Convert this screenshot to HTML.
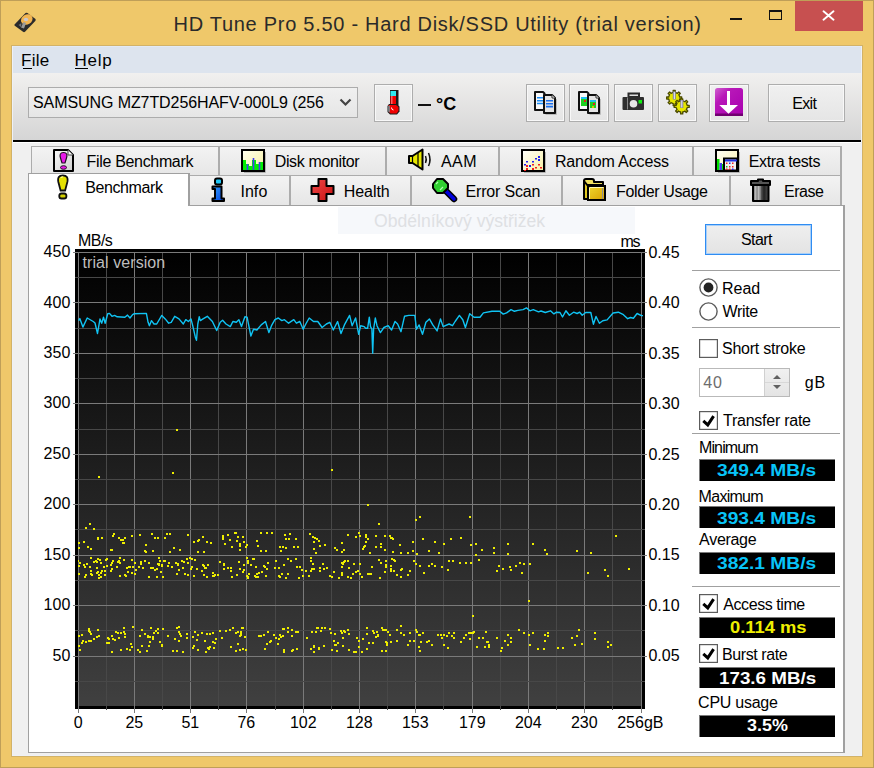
<!DOCTYPE html>
<html><head><meta charset="utf-8">
<style>
*{margin:0;padding:0;box-sizing:border-box}
html,body{width:874px;height:768px;overflow:hidden;background:#EFC86A;font-family:"Liberation Sans",sans-serif;color:#000}
.a{position:absolute}
.t{position:absolute;white-space:pre;line-height:1;font-size:15.2px}
#frame{left:0;top:0;width:874px;height:768px;border:1px solid #BF9F58}
#title{left:173.5px;top:13.5px;font-size:20px;letter-spacing:0.72px;color:#2A2A2A}
#close{left:795px;top:1px;width:68px;height:30px;background:#C75050}
#client{left:11px;top:45px;width:852px;height:712px;background:#F0F0F0;border:1px solid #D2B268}
#cedge{left:12px;top:46px;width:850px;height:710px;border:1px solid #EEF1F7;border-top:none}
#menubar{left:12px;top:46px;width:850px;height:27px;background:#DDE4EE;border-left:1px solid #E2EAF6;border-top:1px solid #E2EAF6}
#toolbar{left:12px;top:73px;width:850px;height:67px;background:linear-gradient(#F1F0EF,#D5D5D5)}
#tbline{left:12px;top:140px;width:850px;height:2px;background:#000;border-bottom:none}
#tbw{left:12px;top:142px;width:850px;height:1px;background:#FFF}
.btn{position:absolute;border:1px solid #ADADAD;box-shadow:inset 0 0 0 1px #F8F8F8;background:linear-gradient(#F0F0F0,#E5E5E5)}
.tab{position:absolute;border:1px solid #ACACAC;border-right-width:2px;border-bottom:none;background:linear-gradient(#F3F3F3,#E6E6E6)}
#panel{left:28px;top:205px;width:817px;height:548px;background:#fff;border:1px solid #A0A0A0;border-right:2px solid #A0A0A0}
.sep{position:absolute;left:692px;width:148px;height:1px;background:#A0A0A0}
.box{position:absolute;left:699px;width:136px;background:#000;border-top:1px solid #7A7A7A;border-left:1px solid #7A7A7A}
.val{position:absolute;left:699px;width:135px;text-align:center;font-weight:bold;font-size:16px;line-height:1;white-space:pre}
.cb{position:absolute;left:699px;width:19px;height:19px;border:1px solid #333;background:#fff}
.lab{position:absolute;white-space:pre;font-size:15.2px;line-height:1}
.ax{position:absolute;white-space:pre;font-size:15.2px;line-height:1}
</style></head><body>
<div id="frame" class="a"></div>
<!-- title bar -->
<svg class="a" style="left:0;top:0" width="40" height="40" viewBox="0 0 40 40">
 <path d="M14.5,24.5 L25.5,13 Q26.5,12.3 27.5,13 L35.5,19 Q36,20 35.3,21 L25,31.8 Q24,32.5 23,31.8 L14.8,25.8 Q14.2,25.2 14.5,24.5 Z" fill="#2B2B2B"/>
 <ellipse cx="26.8" cy="19.5" rx="6" ry="5" fill="#F2B450" transform="rotate(-30 26.8 19.5)"/>
 <ellipse cx="26" cy="19.5" rx="2.2" ry="1.8" fill="#C8C8D0"/>
 <path d="M21,27.5 L23.5,22 L26,23 L24,28.5 Z" fill="#9A9A9A"/>
 <path d="M18.5,25 L21.5,23 L21,27 Z" fill="#707070"/>
</svg>
<div id="title" class="t">HD Tune Pro 5.50 - Hard Disk/SSD Utility (trial version)</div>
<div class="a" style="left:730px;top:18px;width:12px;height:2px;background:#111"></div>
<div class="a" style="left:769px;top:10px;width:13px;height:10px;border:1px solid #111;border-top-width:2px"></div>
<div id="close" class="a"></div>
<svg class="a" style="left:822px;top:10px" width="13" height="11" viewBox="0 0 13 11"><path d="M1.5,1.3 L11.5,9.7 M11.5,1.3 L1.5,9.7" stroke="#fff" stroke-width="1.9" stroke-linecap="round"/></svg>

<div id="client" class="a"></div>
<div id="menubar" class="a"></div>
<div class="t" style="left:21.0px;top:52.0px;font-size:17px;letter-spacing:0.267px;color:#000">File</div>
<div class="a" style="left:23px;top:68px;width:9px;height:1px;background:#000"></div>
<div class="t" style="left:74.4px;top:52.0px;font-size:17px;letter-spacing:0.767px;color:#000">Help</div>
<div class="a" style="left:75px;top:68px;width:13px;height:1px;background:#000"></div>

<div id="toolbar" class="a"></div>
<div id="tbline" class="a"></div><div id="tbw" class="a"></div><div id="cedge" class="a"></div>
<!-- combo -->
<div class="a" style="left:28px;top:87px;width:330px;height:31px;border:1px solid #ACACAC;background:linear-gradient(#F0F0F0,#E6E6E6)"></div>
<div class="t" style="left:33.0px;top:95.2px;font-size:16px;letter-spacing:-0.083px;color:#000">SAMSUNG MZ7TD256HAFV-000L9 (256</div>
<svg class="a" style="left:339px;top:98px" width="13" height="9" viewBox="0 0 13 9"><path d="M1.5,1.5 L6.5,6.5 L11.5,1.5" stroke="#444" stroke-width="2.2" fill="none"/></svg>
<!-- thermometer button -->
<div class="btn" style="left:374px;top:84px;width:39px;height:38px"></div>
<svg class="a" style="left:376px;top:86px" width="36" height="34" viewBox="0 0 36 34">
 <rect x="14" y="4" width="8.5" height="20" fill="#1A1A1A"/>
 <rect x="14.5" y="5" width="5.5" height="5" fill="#30E8F0"/>
 <rect x="14.5" y="10" width="5.5" height="12" fill="#F00000"/>
 <rect x="15" y="10" width="1.5" height="8" fill="#FF6060"/>
 <path d="M13,18 H20 L23.5,20.5 V25.5 L21,28.5 H14 L11.5,26 V20 Z" fill="#1A1A1A"/>
 <path d="M12.5,19 H20 L22.5,21 V25 L20.5,27.5 H14.5 L12.5,25.5 Z" fill="#F00000"/>
 <path d="M12.5,20 V25.5 L13.5,26.5 V19.5 Z" fill="#40E0E8"/>
 <path d="M15.5,21.5 Q15.5,24 17.5,24" stroke="#fff" stroke-width="1" fill="none"/>
</svg>
<div class="a" style="left:418px;top:104px;width:13px;height:2px;background:#111"></div>
<div class="t" style="left:436px;top:95px;font-size:18px;font-weight:bold">°C</div>
<!-- toolbar buttons -->
<div class="btn" style="left:526px;top:84px;width:39px;height:38px"></div>
<div class="btn" style="left:569px;top:84px;width:40px;height:38px"></div>
<div class="btn" style="left:614px;top:84px;width:39px;height:38px"></div>
<div class="btn" style="left:658px;top:84px;width:39px;height:38px"></div>
<div class="btn" style="left:709px;top:84px;width:40px;height:38px"></div>
<div class="btn" style="left:768px;top:84px;width:77px;height:38px"></div>
<div class="t" style="left:792.2px;top:95.6px;font-size:16px;letter-spacing:-0.667px;color:#000">Exit</div>
<!-- icons in buttons -->
<svg class="a" style="left:526px;top:86px" width="40" height="34" viewBox="0 0 40 34">
 <path d="M9,6 H17 L18.5,7.5 V24 H9 Z" fill="#FAFAFA" stroke="#111" stroke-width="2" stroke-linejoin="round"/>
 <path d="M11,11.7 H17 M11,14.8 H17 M11,17.5 H17" stroke="#1A8CF8" stroke-width="1.6"/>
 <path d="M18,9 H26 L29,12 V27 H18 Z" fill="#E4E4E4" stroke="#111" stroke-width="2" stroke-linejoin="round"/>
 <path d="M26,9 V12 H29" fill="#fff" stroke="#333" stroke-width="1"/>
 <path d="M20,14.8 H27 M20,17.8 H27 M20,20.6 H27" stroke="#1A70F0" stroke-width="1.6"/>
 <path d="M30,13 V28 H19.5" stroke="#000" stroke-opacity="0.25" stroke-width="1.5" fill="none"/>
</svg>
<svg class="a" style="left:570px;top:86px" width="40" height="34" viewBox="0 0 40 34">
 <path d="M9,6 H17 L18.5,7.5 V24 H9 Z" fill="#FAFAFA" stroke="#111" stroke-width="2" stroke-linejoin="round"/>
 <rect x="11" y="11" width="6" height="9" fill="#20D020"/><rect x="11" y="11" width="6" height="2" fill="#20C0F0"/><rect x="14" y="14" width="2" height="2" fill="#E02020"/>
 <path d="M18,9 H26 L29,12 V27 H18 Z" fill="#E4E4E4" stroke="#111" stroke-width="2" stroke-linejoin="round"/>
 <path d="M26,9 V12 H29" fill="#fff" stroke="#333" stroke-width="1"/>
 <rect x="20" y="14" width="6" height="8" fill="#20D020"/><rect x="20" y="14" width="6" height="2" fill="#20C0F0"/><rect x="23" y="17" width="2" height="2" fill="#E02020"/><rect x="22" y="20" width="2" height="2" fill="#D0D000"/>
 <path d="M30,13 V28 H19.5" stroke="#000" stroke-opacity="0.25" stroke-width="1.5" fill="none"/>
</svg>
<svg class="a" style="left:614px;top:86px" width="40" height="34" viewBox="0 0 40 34">
 <path d="M14.5,7.5 H25 V11 H14.5 Z" fill="#E0E0E0" stroke="#2A2A2A" stroke-width="2"/>
 <rect x="8.5" y="11" width="21.5" height="13" rx="1" fill="#2E2E2E"/>
 <rect x="13" y="11.5" width="1" height="12" fill="#888"/>
 <circle cx="19.5" cy="17.8" r="3.8" fill="#E6E6E6"/>
 <rect x="24.5" y="14" width="3.5" height="3.5" fill="#10F010"/>
</svg>
<svg class="a" style="left:660px;top:86px" width="36" height="34" viewBox="0 0 36 34">
 <g fill="#E6E600" stroke="#4A4A00" stroke-width="1.3" stroke-linejoin="round">
  <path d="M19.59,10.48 L19.71,11.02 L21.72,10.93 L21.72,13.07 L19.71,12.98 L19.59,13.52 L19.09,14.74 L18.79,15.20 L20.28,16.56 L18.76,18.08 L17.40,16.59 L16.94,16.89 L15.72,17.39 L15.18,17.51 L15.27,19.52 L13.13,19.52 L13.22,17.51 L12.68,17.39 L11.46,16.89 L11.00,16.59 L9.64,18.08 L8.12,16.56 L9.61,15.20 L9.31,14.74 L8.81,13.52 L8.69,12.98 L6.68,13.07 L6.68,10.93 L8.69,11.02 L8.81,10.48 L9.31,9.26 L9.61,8.80 L8.12,7.44 L9.64,5.92 L11.00,7.41 L11.46,7.11 L12.68,6.61 L13.22,6.49 L13.13,4.48 L15.27,4.48 L15.18,6.49 L15.72,6.61 L16.94,7.11 L17.40,7.41 L18.76,5.92 L20.28,7.44 L18.79,8.80 L19.09,9.26Z"/>
  <path d="M27.09,18.88 L27.21,19.42 L29.22,19.33 L29.22,21.47 L27.21,21.38 L27.09,21.92 L26.59,23.14 L26.29,23.60 L27.78,24.96 L26.26,26.48 L24.90,24.99 L24.44,25.29 L23.22,25.79 L22.68,25.91 L22.77,27.92 L20.63,27.92 L20.72,25.91 L20.18,25.79 L18.96,25.29 L18.50,24.99 L17.14,26.48 L15.62,24.96 L17.11,23.60 L16.81,23.14 L16.31,21.92 L16.19,21.38 L14.18,21.47 L14.18,19.33 L16.19,19.42 L16.31,18.88 L16.81,17.66 L17.11,17.20 L15.62,15.84 L17.14,14.32 L18.50,15.81 L18.96,15.51 L20.18,15.01 L20.72,14.89 L20.63,12.88 L22.77,12.88 L22.68,14.89 L23.22,15.01 L24.44,15.51 L24.90,15.81 L26.26,14.32 L27.78,15.84 L26.29,17.20 L26.59,17.66Z"/>
 </g>
 <rect x="12.8" y="5.5" width="3" height="8" fill="#8080A0"/><rect x="13.8" y="6" width="1" height="7" fill="#F0F0FF"/>
 <rect x="20.3" y="14" width="3" height="8" fill="#8080A0"/><rect x="21.3" y="14.5" width="1" height="7" fill="#F0F0FF"/>
</svg>
<svg class="a" style="left:715px;top:88px" width="28" height="28" viewBox="0 0 28 28">
 <defs><linearGradient id="pg" x1="0" y1="0" x2="1" y2="1"><stop offset="0" stop-color="#D060D0"/><stop offset="0.3" stop-color="#B818B8"/><stop offset="1" stop-color="#A800B0"/></linearGradient></defs>
 <rect x="0" y="0" width="28" height="28" rx="2.5" fill="url(#pg)"/>
 <rect x="0" y="25.5" width="28" height="2.5" fill="#700070"/>
 <rect x="12" y="3" width="3" height="16" fill="#fff"/>
 <path d="M4.3,17 L23,17 L13.5,25.8 Z" fill="#fff"/>
</svg>

<!-- tabs row 1 -->
<div class="tab" style="left:31px;top:146px;width:189px;height:30px"></div>
<div class="tab" style="left:219px;top:146px;width:168px;height:30px"></div>
<div class="tab" style="left:386px;top:146px;width:114px;height:30px"></div>
<div class="tab" style="left:499px;top:146px;width:195px;height:30px"></div>
<div class="tab" style="left:693px;top:146px;width:149px;height:30px"></div>
<!-- tabs row 2 -->
<div class="tab" style="left:189px;top:175px;width:102px;height:30px"></div>
<div class="tab" style="left:290px;top:175px;width:122px;height:30px"></div>
<div class="tab" style="left:411px;top:175px;width:152px;height:30px"></div>
<div class="tab" style="left:562px;top:175px;width:169px;height:30px"></div>
<div class="tab" style="left:730px;top:175px;width:112px;height:30px"></div>

<div id="panel" class="a"></div>
<!-- selected tab -->
<div class="a" style="left:28px;top:173px;width:162px;height:33px;background:#fff;border:1px solid #A0A0A0;border-bottom:none;border-right:2px solid #A0A0A0"></div>

<!-- tab icons -->
<svg class="a" style="left:52px;top:148px" width="24" height="26" viewBox="0 0 24 26">
 <defs><linearGradient id="pgf" x1="0" y1="0" x2="1" y2="1"><stop offset="0" stop-color="#FAFAFA"/><stop offset="1" stop-color="#CFCFCF"/></linearGradient></defs>
 <path d="M2,2 H16 L21,7 V23 H2 Z" fill="url(#pgf)" stroke="#000" stroke-width="2" stroke-linejoin="round"/>
 <path d="M16,2 V7 H21" fill="#fff" stroke="#444" stroke-width="1"/>
 <path d="M11.5,4.5 C15,4.5 15.5,7 14.5,10 L13,15 H10 L8.5,10 C7.5,7 8,4.5 11.5,4.5 Z" fill="#E818E8" stroke="#201020" stroke-width="1.2"/>
 <ellipse cx="11.5" cy="19.5" rx="3" ry="1.8" fill="#E818E8" stroke="#201020" stroke-width="1"/>
</svg>
<svg class="a" style="left:56.5px;top:174px" width="12.6" height="27" viewBox="0 0 14 27" preserveAspectRatio="none">
 <path d="M6.5,1.5 C11,1.5 12.5,3.5 11.5,8 L9,16.5 H4 L1.5,8 C0.5,3.5 2,1.5 6.5,1.5 Z" fill="#E4E000" stroke="#111" stroke-width="2"/>
 <path d="M4.5,4 C4.5,3 6,2.8 7,3" stroke="#FFFF90" stroke-width="1.2" fill="none"/>
 <rect x="2.5" y="19.5" width="8" height="5" rx="2.5" fill="#D4D000" stroke="#111" stroke-width="2"/>
</svg>
<svg class="a" style="left:240px;top:148px" width="27" height="26" viewBox="0 0 27 26">
 <defs><linearGradient id="dmg" x1="0" y1="0" x2="1" y2="1"><stop offset="0" stop-color="#FFFFF0"/><stop offset="1" stop-color="#F8F0A0"/></linearGradient></defs>
 <rect x="2" y="2" width="22" height="21" fill="url(#dmg)" stroke="#000" stroke-width="2"/>
 <path d="M3,12 H6 V16 H9 V18 H12 V12 H16 V16 H19 V14 H23 V22 H3 Z" fill="#00F000"/>
 <path d="M7.5,16 V22 M13.5,10 V22 M19.5,14 V22" stroke="#4040F0" stroke-width="1.6"/>
 <path d="M25,4 V24 H4" stroke="#000" stroke-opacity="0.3" stroke-width="1.5" fill="none"/>
</svg>
<svg class="a" style="left:406px;top:147px" width="28" height="26" viewBox="0 0 28 26">
 <path d="M3,9 H6.5 L16.5,2.5 V22.5 L6.5,16 H3 Z" fill="#E8E800" stroke="#000" stroke-width="2" stroke-linejoin="round"/>
 <path d="M6.5,9 V16 M12,5.5 V19.5" stroke="#000" stroke-width="1.2"/>
 <path d="M19.5,9 Q21,12.5 19.5,16" stroke="#111" stroke-width="1.5" fill="none"/>
 <path d="M22.5,6 Q25.5,12.5 22.5,19" stroke="#111" stroke-width="1.5" fill="none"/>
</svg>
<svg class="a" style="left:520px;top:148px" width="27" height="26" viewBox="0 0 27 26">
 <defs><linearGradient id="rag" x1="0" y1="0" x2="1" y2="1"><stop offset="0" stop-color="#FFFFFF"/><stop offset="1" stop-color="#F8F0A0"/></linearGradient></defs>
 <rect x="2" y="2" width="22" height="21" fill="url(#rag)" stroke="#000" stroke-width="2"/>
 <path d="M25,4 V24 H4" stroke="#000" stroke-opacity="0.3" stroke-width="1.5" fill="none"/>
 <g fill="#2020F0"><rect x="6" y="13" width="2" height="1.5"/><rect x="12" y="13" width="2" height="1.5"/><rect x="15" y="10" width="2" height="1.5"/><rect x="18" y="8" width="2" height="2"/><rect x="18" y="11" width="2" height="2"/><rect x="4" y="16" width="2" height="1.5"/><rect x="9" y="17" width="2" height="2"/></g>
 <g fill="#F02020"><rect x="6" y="17" width="2" height="2"/><rect x="6" y="20" width="2" height="2"/><rect x="12" y="16" width="2" height="1.5"/><rect x="12" y="20" width="2" height="2"/><rect x="15" y="19" width="2" height="1.5"/><rect x="18" y="16" width="2" height="1.5"/><rect x="20" y="19" width="2" height="1.5"/><rect x="4" y="22" width="2" height="1"/></g>
</svg>
<svg class="a" style="left:714px;top:148px" width="27" height="26" viewBox="0 0 27 26">
 <defs><linearGradient id="etg" x1="0" y1="0" x2="1" y2="1"><stop offset="0" stop-color="#FFFFF8"/><stop offset="1" stop-color="#F8F0A8"/></linearGradient></defs>
 <rect x="2" y="2" width="22" height="21" fill="url(#etg)" stroke="#000" stroke-width="2"/>
 <path d="M25,4 V24 H4" stroke="#000" stroke-opacity="0.3" stroke-width="1.5" fill="none"/>
 <rect x="3" y="11" width="2.5" height="11" fill="#00E000"/><rect x="5.5" y="15" width="2.5" height="7" fill="#4040F0"/><rect x="8" y="16" width="1.5" height="6" fill="#00E000"/>
 <rect x="10" y="10.5" width="13" height="12" fill="#F0F0F0" stroke="#000" stroke-width="2"/>
 <rect x="11" y="11.5" width="12" height="2" fill="#2030E0"/>
 <g fill="#F02020"><rect x="12" y="14.5" width="1.5" height="1.5"/><rect x="18" y="14.5" width="1.5" height="1.5"/><rect x="15" y="18" width="1.5" height="1.5"/><rect x="18" y="18" width="1.5" height="1.5"/><rect x="12" y="20.5" width="1.5" height="1.5"/><rect x="15" y="20.5" width="1.5" height="1.5"/></g>
 <g fill="#2020F0"><rect x="15" y="14.5" width="1.5" height="1.5"/><rect x="18" y="20.5" width="1.5" height="1.5"/></g>
 <rect x="12" y="18" width="1.5" height="1.5" fill="#20B020"/>
</svg>
<svg class="a" style="left:211px;top:177px" width="16" height="26" viewBox="0 0 16 26">
 <defs><linearGradient id="ig" x1="0" y1="0" x2="1" y2="1"><stop offset="0" stop-color="#30A0FF"/><stop offset="1" stop-color="#0040E0"/></linearGradient></defs>
 <rect x="4" y="1.5" width="7" height="6" rx="2" fill="#20C8F8" stroke="#000" stroke-width="2"/>
 <path d="M1.5,9.5 H10.5 V21.5 H13 V24 H1.5 V21.5 H4 V12 H1.5 Z" fill="url(#ig)" stroke="#000" stroke-width="2" stroke-linejoin="round"/>
</svg>
<svg class="a" style="left:309px;top:177px" width="28" height="27" viewBox="0 0 28 27">
 <defs><linearGradient id="hg" x1="0" y1="0" x2="1" y2="1"><stop offset="0" stop-color="#F04848"/><stop offset="1" stop-color="#C81010"/></linearGradient></defs>
 <path d="M9.5,2 H17.5 V9 H24.5 V17 H17.5 V24 H9.5 V17 H2.5 V9 H9.5 Z" fill="url(#hg)" stroke="#000" stroke-width="2" stroke-linejoin="round"/>
</svg>
<svg class="a" style="left:431px;top:177px" width="27" height="27" viewBox="0 0 27 27">
 <path d="M15,14 L23,22" stroke="#000" stroke-width="6.5" stroke-linecap="round"/>
 <path d="M15,14 L23,22" stroke="#0000E0" stroke-width="3.5" stroke-linecap="round"/>
 <path d="M6,2 H12 L17,7 V11 L12,16 H6 L2,11 V7 Z" fill="#30D030" stroke="#000" stroke-width="2" stroke-linejoin="round"/>
 <path d="M5,7 L7,5 M9,13 L12,10" stroke="#B0FFB0" stroke-width="1.2"/>
</svg>
<svg class="a" style="left:582px;top:177px" width="26" height="27" viewBox="0 0 26 27">
 <defs><linearGradient id="fg" x1="0" y1="0" x2="1" y2="1"><stop offset="0" stop-color="#F0D830"/><stop offset="1" stop-color="#D8A000"/></linearGradient></defs>
 <path d="M2,4 Q2,2 4,2 H10 Q12,2 12,4 V5 H21 V8 H2 Z" fill="#F0E060" stroke="#000" stroke-width="2" stroke-linejoin="round"/>
 <path d="M2,4 V22 H6 V9 Z" fill="#E0C820" stroke="#000" stroke-width="2" stroke-linejoin="round"/>
 <rect x="6" y="9" width="17" height="14" fill="url(#fg)" stroke="#000" stroke-width="2"/>
 <path d="M8,10.5 H21.5 M7.5,11 V22" stroke="#FFF8B0" stroke-width="1"/>
 <path d="M20.5,11 V22" stroke="#909090" stroke-width="1"/>
</svg>
<svg class="a" style="left:749px;top:177px" width="26" height="27" viewBox="0 0 26 27">
 <defs><linearGradient id="tg" x1="0" y1="0" x2="1" y2="0"><stop offset="0" stop-color="#606060"/><stop offset="0.25" stop-color="#E8E8E8"/><stop offset="0.45" stop-color="#909090"/><stop offset="0.7" stop-color="#202020"/><stop offset="1" stop-color="#505050"/></linearGradient></defs>
 <path d="M9,2.5 H14 V4 H21 V8 H2 V4 H9 Z" fill="#555" stroke="#000" stroke-width="2" stroke-linejoin="round"/>
 <path d="M4,8 H19.5 V24 H4 Z" fill="url(#tg)" stroke="#000" stroke-width="2" stroke-linejoin="round"/>
 <path d="M8,9 V23 M13,9 V23" stroke="#303030" stroke-width="0.8"/>
</svg>

<!-- tab labels -->
<div class="t" style="left:86.6px;top:154.0px;font-size:16px;letter-spacing:-0.331px;color:#000">File Benchmark</div>
<div class="t" style="left:274.7px;top:154.1px;font-size:16px;letter-spacing:-0.355px;color:#000">Disk monitor</div>
<div class="t" style="left:441.0px;top:154.0px;font-size:16px;letter-spacing:0.4px;color:#000">AAM</div>
<div class="t" style="left:554.9px;top:154.0px;font-size:16px;letter-spacing:-0.117px;color:#000">Random Access</div>
<div class="t" style="left:748.8px;top:154.0px;font-size:16px;letter-spacing:-0.4px;color:#000">Extra tests</div>
<div class="t" style="left:85.2px;top:180.3px;font-size:16px;letter-spacing:-0.4px;color:#000">Benchmark</div>
<div class="t" style="left:240.4px;top:183.7px;font-size:16px;letter-spacing:0.067px;color:#000">Info</div>
<div class="t" style="left:343.7px;top:183.6px;font-size:16px;letter-spacing:-0.04px;color:#000">Health</div>
<div class="t" style="left:465.5px;top:183.6px;font-size:16px;letter-spacing:-0.178px;color:#000">Error Scan</div>
<div class="t" style="left:616.1px;top:183.6px;font-size:16px;letter-spacing:-0.382px;color:#000">Folder Usage</div>
<div class="t" style="left:784.0px;top:183.5px;font-size:16px;letter-spacing:-0.5px;color:#000">Erase</div>

<!-- watermark -->
<div class="a" style="left:338px;top:207px;width:297px;height:27px;background:#F6F8FB"></div>
<div class="t" style="left:374px;top:213px;font-size:17.6px;color:#DEE0E3">Obdélníkový výstřižek</div>

<!-- chart -->
<svg class="a" style="left:0;top:0" width="874" height="768" viewBox="0 0 874 768">
 <defs><linearGradient id="cg" x1="0" y1="0" x2="0" y2="1"><stop offset="0" stop-color="#000"/><stop offset="1" stop-color="#404040"/></linearGradient>
 <clipPath id="cc"><rect x="78" y="252" width="565" height="454"/></clipPath></defs>
 <rect x="75" y="249" width="570" height="460" fill="#000"/>
 <rect x="78" y="252" width="564" height="454" fill="url(#cg)"/><rect x="642" y="252" width="1" height="454" fill="#000"/>
 <rect x="106" y="252" width="1" height="458" fill="#484848"/><rect x="134" y="252" width="1" height="461" fill="#7A7A7A"/><rect x="162" y="252" width="1" height="458" fill="#484848"/><rect x="190" y="252" width="1" height="461" fill="#7A7A7A"/><rect x="218" y="252" width="1" height="458" fill="#484848"/><rect x="246" y="252" width="1" height="461" fill="#7A7A7A"/><rect x="275" y="252" width="1" height="458" fill="#484848"/><rect x="303" y="252" width="1" height="461" fill="#7A7A7A"/><rect x="331" y="252" width="1" height="458" fill="#484848"/><rect x="359" y="252" width="1" height="461" fill="#7A7A7A"/><rect x="387" y="252" width="1" height="458" fill="#484848"/><rect x="415" y="252" width="1" height="461" fill="#7A7A7A"/><rect x="443" y="252" width="1" height="458" fill="#484848"/><rect x="472" y="252" width="1" height="461" fill="#7A7A7A"/><rect x="500" y="252" width="1" height="458" fill="#484848"/><rect x="528" y="252" width="1" height="461" fill="#7A7A7A"/><rect x="556" y="252" width="1" height="458" fill="#484848"/><rect x="584" y="252" width="1" height="461" fill="#7A7A7A"/><rect x="612" y="252" width="1" height="458" fill="#484848"/><rect x="78" y="252" width="1" height="461" fill="#7A7A7A"/><rect x="641" y="252" width="1" height="461" fill="#7A7A7A"/><rect x="75" y="681" width="570" height="1" fill="#484848"/><rect x="73" y="656" width="574" height="1" fill="#7A7A7A"/><rect x="75" y="630" width="570" height="1" fill="#484848"/><rect x="73" y="605" width="574" height="1" fill="#7A7A7A"/><rect x="75" y="580" width="570" height="1" fill="#484848"/><rect x="73" y="555" width="574" height="1" fill="#7A7A7A"/><rect x="75" y="529" width="570" height="1" fill="#484848"/><rect x="73" y="504" width="574" height="1" fill="#7A7A7A"/><rect x="75" y="479" width="570" height="1" fill="#484848"/><rect x="73" y="454" width="574" height="1" fill="#7A7A7A"/><rect x="75" y="429" width="570" height="1" fill="#484848"/><rect x="73" y="403" width="574" height="1" fill="#7A7A7A"/><rect x="75" y="378" width="570" height="1" fill="#484848"/><rect x="73" y="353" width="574" height="1" fill="#7A7A7A"/><rect x="75" y="328" width="570" height="1" fill="#484848"/><rect x="73" y="302" width="574" height="1" fill="#7A7A7A"/><rect x="75" y="277" width="570" height="1" fill="#484848"/><rect x="73" y="252" width="574" height="1" fill="#7A7A7A"/>
 <g clip-path="url(#cc)">
 <path d="M181 560h2v2h-2zM287 558h2v2h-2zM250 564h2v2h-2zM96 567h2v2h-2zM89 566h2v2h-2zM99 559h2v2h-2zM214 574h2v2h-2zM117 561h2v2h-2zM279 576h2v2h-2zM263 565h2v2h-2zM391 558h2v2h-2zM353 563h2v2h-2zM123 559h2v2h-2zM176 573h2v2h-2zM135 569h2v2h-2zM283 564h2v2h-2zM253 558h2v2h-2zM96 561h2v2h-2zM296 566h2v2h-2zM178 569h2v2h-2zM223 563h2v2h-2zM333 571h2v2h-2zM156 568h2v2h-2zM246 575h2v2h-2zM312 563h2v2h-2zM393 559h2v2h-2zM212 572h2v2h-2zM126 567h2v2h-2zM90 570h2v2h-2zM323 568h2v2h-2zM359 563h2v2h-2zM301 569h2v2h-2zM264 566h2v2h-2zM347 576h2v2h-2zM230 570h2v2h-2zM97 571h2v2h-2zM285 577h2v2h-2zM342 563h2v2h-2zM201 570h2v2h-2zM84 566h2v2h-2zM131 559h2v2h-2zM96 572h2v2h-2zM119 562h2v2h-2zM203 574h2v2h-2zM103 566h2v2h-2zM254 575h2v2h-2zM341 574h2v2h-2zM167 565h2v2h-2zM193 575h2v2h-2zM385 560h2v2h-2zM134 562h2v2h-2zM152 567h2v2h-2zM267 562h2v2h-2zM78 565h2v2h-2zM196 568h2v2h-2zM384 571h2v2h-2zM243 569h2v2h-2zM295 558h2v2h-2zM367 573h2v2h-2zM359 573h2v2h-2zM203 565h2v2h-2zM110 570h2v2h-2zM97 558h2v2h-2zM144 560h2v2h-2zM186 558h2v2h-2zM77 560h2v2h-2zM110 564h2v2h-2zM85 574h2v2h-2zM275 560h2v2h-2zM158 564h2v2h-2zM194 559h2v2h-2zM350 577h2v2h-2zM227 567h2v2h-2zM105 559h2v2h-2zM187 562h2v2h-2zM344 560h2v2h-2zM84 576h2v2h-2zM247 560h2v2h-2zM252 558h2v2h-2zM247 577h2v2h-2zM355 571h2v2h-2zM161 564h2v2h-2zM131 572h2v2h-2zM248 573h2v2h-2zM183 561h2v2h-2zM338 577h2v2h-2zM352 573h2v2h-2zM341 572h2v2h-2zM150 567h2v2h-2zM191 558h2v2h-2zM86 563h2v2h-2zM160 571h2v2h-2zM385 566h2v2h-2zM379 577h2v2h-2zM385 564h2v2h-2zM148 562h2v2h-2zM140 561h2v2h-2zM278 575h2v2h-2zM348 567h2v2h-2zM287 573h2v2h-2zM104 570h2v2h-2zM370 573h2v2h-2zM319 567h2v2h-2zM134 573h2v2h-2zM184 573h2v2h-2zM390 565h2v2h-2zM206 576h2v2h-2zM310 560h2v2h-2zM118 560h2v2h-2zM368 573h2v2h-2zM124 574h2v2h-2zM393 570h2v2h-2zM190 568h2v2h-2zM119 557h2v2h-2zM390 570h2v2h-2zM247 576h2v2h-2zM217 574h2v2h-2zM343 561h2v2h-2zM158 563h2v2h-2zM154 569h2v2h-2zM161 565h2v2h-2zM119 575h2v2h-2zM191 566h2v2h-2zM265 575h2v2h-2zM212 575h2v2h-2zM239 568h2v2h-2zM246 557h2v2h-2zM219 561h2v2h-2zM78 573h2v2h-2zM132 566h2v2h-2zM311 568h2v2h-2zM182 567h2v2h-2zM256 573h2v2h-2zM111 568h2v2h-2zM157 563h2v2h-2zM326 567h2v2h-2zM258 572h2v2h-2zM371 566h2v2h-2zM274 567h2v2h-2zM242 571h2v2h-2zM223 568h2v2h-2zM231 576h2v2h-2zM302 575h2v2h-2zM380 562h2v2h-2zM257 576h2v2h-2zM347 560h2v2h-2zM116 566h2v2h-2zM100 562h2v2h-2zM101 570h2v2h-2zM329 575h2v2h-2zM127 571h2v2h-2zM290 560h2v2h-2zM361 576h2v2h-2zM148 576h2v2h-2zM205 567h2v2h-2zM396 574h2v2h-2zM129 566h2v2h-2zM243 564h2v2h-2zM140 563h2v2h-2zM310 557h2v2h-2zM255 566h2v2h-2zM83 564h2v2h-2zM278 567h2v2h-2zM98 577h2v2h-2zM331 576h2v2h-2zM111 562h2v2h-2zM90 573h2v2h-2zM164 560h2v2h-2zM213 575h2v2h-2zM341 562h2v2h-2zM125 575h2v2h-2zM261 571h2v2h-2zM106 558h2v2h-2zM299 566h2v2h-2zM100 576h2v2h-2zM281 573h2v2h-2zM104 574h2v2h-2zM98 574h2v2h-2zM223 564h2v2h-2zM255 576h2v2h-2zM163 560h2v2h-2zM247 562h2v2h-2zM112 560h2v2h-2zM93 561h2v2h-2zM177 563h2v2h-2zM322 563h2v2h-2zM238 561h2v2h-2zM189 557h2v2h-2zM158 557h2v2h-2zM313 568h2v2h-2zM138 566h2v2h-2zM378 559h2v2h-2zM341 566h2v2h-2zM236 574h2v2h-2zM204 567h2v2h-2zM298 577h2v2h-2zM187 574h2v2h-2zM305 570h2v2h-2zM207 564h2v2h-2zM95 560h2v2h-2zM100 572h2v2h-2zM159 560h2v2h-2zM104 574h2v2h-2zM357 570h2v2h-2zM168 562h2v2h-2zM171 566h2v2h-2zM128 566h2v2h-2zM162 576h2v2h-2zM390 568h2v2h-2zM156 576h2v2h-2zM177 564h2v2h-2zM77 565h2v2h-2zM230 567h2v2h-2zM142 567h2v2h-2zM79 562h2v2h-2zM106 565h2v2h-2zM90 557h2v2h-2zM175 562h2v2h-2zM266 568h2v2h-2zM319 570h2v2h-2zM308 575h2v2h-2zM202 564h2v2h-2zM394 560h2v2h-2zM310 570h2v2h-2zM91 574h2v2h-2zM364 545h2v2h-2zM313 548h2v2h-2zM122 542h2v2h-2zM239 549h2v2h-2zM336 549h2v2h-2zM265 550h2v2h-2zM297 546h2v2h-2zM151 533h2v2h-2zM120 539h2v2h-2zM111 549h2v2h-2zM257 545h2v2h-2zM279 546h2v2h-2zM235 532h2v2h-2zM334 547h2v2h-2zM239 543h2v2h-2zM289 533h2v2h-2zM314 537h2v2h-2zM101 537h2v2h-2zM312 536h2v2h-2zM315 552h2v2h-2zM236 540h2v2h-2zM231 546h2v2h-2zM324 544h2v2h-2zM284 534h2v2h-2zM124 537h2v2h-2zM316 538h2v2h-2zM260 532h2v2h-2zM97 537h2v2h-2zM293 546h2v2h-2zM295 538h2v2h-2zM243 541h2v2h-2zM227 534h2v2h-2zM365 536h2v2h-2zM392 551h2v2h-2zM83 541h2v2h-2zM341 551h2v2h-2zM222 537h2v2h-2zM145 551h2v2h-2zM145 544h2v2h-2zM123 542h2v2h-2zM384 535h2v2h-2zM341 542h2v2h-2zM363 546h2v2h-2zM152 550h2v2h-2zM234 532h2v2h-2zM78 542h2v2h-2zM222 538h2v2h-2zM122 539h2v2h-2zM179 549h2v2h-2zM78 547h2v2h-2zM347 534h2v2h-2zM375 546h2v2h-2zM367 538h2v2h-2zM197 540h2v2h-2zM399 544h2v2h-2zM193 541h2v2h-2zM166 533h2v2h-2zM110 549h2v2h-2zM169 551h2v2h-2zM157 537h2v2h-2zM242 536h2v2h-2zM197 551h2v2h-2zM362 548h2v2h-2zM280 550h2v2h-2zM380 543h2v2h-2zM309 533h2v2h-2zM313 541h2v2h-2zM319 545h2v2h-2zM169 533h2v2h-2zM375 535h2v2h-2zM229 539h2v2h-2zM173 547h2v2h-2zM391 537h2v2h-2zM288 538h2v2h-2zM256 540h2v2h-2zM131 535h2v2h-2zM144 550h2v2h-2zM237 536h2v2h-2zM369 552h2v2h-2zM222 535h2v2h-2zM139 534h2v2h-2zM187 534h2v2h-2zM154 537h2v2h-2zM260 550h2v2h-2zM318 540h2v2h-2zM210 542h2v2h-2zM198 539h2v2h-2zM97 538h2v2h-2zM389 535h2v2h-2zM239 545h2v2h-2zM355 536h2v2h-2zM164 537h2v2h-2zM206 541h2v2h-2zM384 549h2v2h-2zM358 532h2v2h-2zM87 546h2v2h-2zM365 541h2v2h-2zM266 532h2v2h-2zM203 551h2v2h-2zM343 549h2v2h-2zM390 537h2v2h-2zM112 535h2v2h-2zM245 546h2v2h-2zM380 546h2v2h-2zM285 547h2v2h-2zM224 543h2v2h-2zM90 548h2v2h-2zM152 550h2v2h-2zM285 538h2v2h-2zM118 537h2v2h-2zM282 546h2v2h-2zM113 533h2v2h-2zM246 544h2v2h-2zM202 536h2v2h-2zM271 532h2v2h-2zM174 638h2v2h-2zM386 642h2v2h-2zM362 638h2v2h-2zM153 632h2v2h-2zM386 644h2v2h-2zM176 627h2v2h-2zM237 643h2v2h-2zM212 632h2v2h-2zM292 649h2v2h-2zM150 627h2v2h-2zM186 637h2v2h-2zM297 631h2v2h-2zM334 644h2v2h-2zM240 631h2v2h-2zM389 634h2v2h-2zM341 632h2v2h-2zM148 645h2v2h-2zM172 650h2v2h-2zM237 631h2v2h-2zM149 636h2v2h-2zM291 650h2v2h-2zM124 636h2v2h-2zM146 650h2v2h-2zM123 627h2v2h-2zM96 636h2v2h-2zM366 648h2v2h-2zM313 651h2v2h-2zM377 634h2v2h-2zM137 649h2v2h-2zM317 627h2v2h-2zM291 635h2v2h-2zM197 634h2v2h-2zM132 626h2v2h-2zM167 635h2v2h-2zM385 629h2v2h-2zM387 631h2v2h-2zM192 647h2v2h-2zM342 637h2v2h-2zM93 638h2v2h-2zM197 649h2v2h-2zM139 635h2v2h-2zM366 627h2v2h-2zM209 646h2v2h-2zM324 627h2v2h-2zM88 628h2v2h-2zM373 632h2v2h-2zM318 648h2v2h-2zM186 633h2v2h-2zM385 641h2v2h-2zM161 644h2v2h-2zM179 633h2v2h-2zM78 645h2v2h-2zM372 642h2v2h-2zM381 627h2v2h-2zM152 638h2v2h-2zM385 650h2v2h-2zM201 632h2v2h-2zM215 638h2v2h-2zM376 631h2v2h-2zM335 644h2v2h-2zM342 645h2v2h-2zM273 634h2v2h-2zM180 635h2v2h-2zM329 628h2v2h-2zM141 645h2v2h-2zM157 628h2v2h-2zM88 640h2v2h-2zM182 651h2v2h-2zM361 651h2v2h-2zM162 628h2v2h-2zM108 638h2v2h-2zM306 637h2v2h-2zM152 636h2v2h-2zM277 643h2v2h-2zM318 647h2v2h-2zM291 629h2v2h-2zM348 633h2v2h-2zM260 635h2v2h-2zM315 631h2v2h-2zM157 632h2v2h-2zM126 648h2v2h-2zM263 634h2v2h-2zM205 651h2v2h-2zM240 632h2v2h-2zM337 642h2v2h-2zM396 629h2v2h-2zM230 646h2v2h-2zM348 649h2v2h-2zM90 633h2v2h-2zM115 631h2v2h-2zM390 641h2v2h-2zM377 635h2v2h-2zM356 637h2v2h-2zM161 645h2v2h-2zM382 629h2v2h-2zM269 641h2v2h-2zM147 635h2v2h-2zM123 631h2v2h-2zM159 641h2v2h-2zM287 631h2v2h-2zM81 634h2v2h-2zM295 631h2v2h-2zM178 631h2v2h-2zM333 640h2v2h-2zM97 629h2v2h-2zM204 640h2v2h-2zM283 628h2v2h-2zM130 643h2v2h-2zM209 633h2v2h-2zM176 650h2v2h-2zM178 640h2v2h-2zM192 636h2v2h-2zM355 651h2v2h-2zM194 631h2v2h-2zM311 631h2v2h-2zM79 649h2v2h-2zM213 647h2v2h-2zM208 648h2v2h-2zM225 630h2v2h-2zM82 640h2v2h-2zM283 649h2v2h-2zM106 642h2v2h-2zM196 639h2v2h-2zM124 633h2v2h-2zM245 649h2v2h-2zM112 638h2v2h-2zM336 650h2v2h-2zM141 629h2v2h-2zM381 650h2v2h-2zM232 627h2v2h-2zM375 636h2v2h-2zM368 642h2v2h-2zM343 630h2v2h-2zM330 632h2v2h-2zM207 647h2v2h-2zM344 631h2v2h-2zM147 636h2v2h-2zM244 636h2v2h-2zM117 632h2v2h-2zM310 648h2v2h-2zM90 640h2v2h-2zM321 627h2v2h-2zM347 629h2v2h-2zM270 640h2v2h-2zM279 634h2v2h-2zM212 641h2v2h-2zM214 642h2v2h-2zM221 637h2v2h-2zM85 641h2v2h-2zM235 632h2v2h-2zM323 645h2v2h-2zM225 630h2v2h-2zM229 629h2v2h-2zM118 637h2v2h-2zM107 637h2v2h-2zM241 627h2v2h-2zM282 628h2v2h-2zM313 645h2v2h-2zM242 627h2v2h-2zM239 635h2v2h-2zM383 629h2v2h-2zM353 651h2v2h-2zM313 646h2v2h-2zM139 651h2v2h-2zM235 650h2v2h-2zM372 630h2v2h-2zM331 649h2v2h-2zM98 635h2v2h-2zM320 630h2v2h-2zM366 633h2v2h-2zM340 630h2v2h-2zM239 649h2v2h-2zM144 633h2v2h-2zM240 634h2v2h-2zM89 631h2v2h-2zM129 649h2v2h-2zM296 648h2v2h-2zM131 646h2v2h-2zM114 639h2v2h-2zM282 635h2v2h-2zM358 640h2v2h-2zM264 648h2v2h-2zM111 651h2v2h-2zM280 636h2v2h-2zM334 633h2v2h-2zM396 640h2v2h-2zM193 645h2v2h-2zM219 630h2v2h-2zM316 627h2v2h-2zM341 632h2v2h-2zM283 651h2v2h-2zM266 643h2v2h-2zM178 626h2v2h-2zM88 630h2v2h-2zM275 637h2v2h-2zM242 648h2v2h-2zM120 632h2v2h-2zM287 627h2v2h-2zM78 635h2v2h-2zM111 635h2v2h-2zM149 641h2v2h-2zM267 631h2v2h-2zM278 638h2v2h-2zM120 649h2v2h-2zM155 630h2v2h-2zM108 642h2v2h-2zM358 646h2v2h-2zM206 633h2v2h-2zM81 642h2v2h-2zM258 635h2v2h-2zM422 538h2v2h-2zM460 537h2v2h-2zM450 538h2v2h-2zM412 541h2v2h-2zM434 541h2v2h-2zM443 543h2v2h-2zM470 544h2v2h-2zM475 543h2v2h-2zM507 543h2v2h-2zM481 549h2v2h-2zM493 547h2v2h-2zM493 552h2v2h-2zM507 553h2v2h-2zM400 552h2v2h-2zM407 552h2v2h-2zM412 550h2v2h-2zM416 553h2v2h-2zM428 550h2v2h-2zM438 552h2v2h-2zM475 554h2v2h-2zM413 560h2v2h-2zM415 563h2v2h-2zM419 565h2v2h-2zM428 565h2v2h-2zM431 563h2v2h-2zM434 565h2v2h-2zM441 566h2v2h-2zM448 560h2v2h-2zM452 560h2v2h-2zM459 562h2v2h-2zM465 562h2v2h-2zM470 562h2v2h-2zM478 559h2v2h-2zM400 569h2v2h-2zM401 568h2v2h-2zM409 570h2v2h-2zM407 574h2v2h-2zM400 576h2v2h-2zM423 572h2v2h-2zM447 569h2v2h-2zM496 570h2v2h-2zM498 565h2v2h-2zM502 568h2v2h-2zM509 566h2v2h-2zM510 569h2v2h-2zM515 565h2v2h-2zM519 562h2v2h-2zM523 563h2v2h-2zM521 572h2v2h-2zM532 543h2v2h-2zM544 549h2v2h-2zM546 553h2v2h-2zM576 550h2v2h-2zM590 552h2v2h-2zM615 535h2v2h-2zM529 563h2v2h-2zM587 572h2v2h-2zM604 569h2v2h-2zM607 575h2v2h-2zM628 568h2v2h-2zM472 615h2v2h-2zM400 625h2v2h-2zM415 629h2v2h-2zM416 631h2v2h-2zM400 632h2v2h-2zM403 634h2v2h-2zM409 632h2v2h-2zM418 634h2v2h-2zM419 634h2v2h-2zM422 632h2v2h-2zM437 634h2v2h-2zM440 634h2v2h-2zM443 634h2v2h-2zM448 632h2v2h-2zM453 632h2v2h-2zM446 635h2v2h-2zM451 635h2v2h-2zM441 637h2v2h-2zM453 637h2v2h-2zM465 634h2v2h-2zM468 632h2v2h-2zM470 632h2v2h-2zM472 632h2v2h-2zM473 631h2v2h-2zM485 631h2v2h-2zM518 629h2v2h-2zM523 632h2v2h-2zM507 634h2v2h-2zM463 637h2v2h-2zM469 638h2v2h-2zM478 637h2v2h-2zM482 637h2v2h-2zM496 637h2v2h-2zM510 637h2v2h-2zM409 640h2v2h-2zM413 640h2v2h-2zM420 641h2v2h-2zM426 641h2v2h-2zM428 640h2v2h-2zM460 641h2v2h-2zM486 641h2v2h-2zM487 641h2v2h-2zM504 640h2v2h-2zM510 641h2v2h-2zM407 644h2v2h-2zM431 644h2v2h-2zM443 644h2v2h-2zM418 646h2v2h-2zM447 647h2v2h-2zM476 646h2v2h-2zM484 646h2v2h-2zM488 644h2v2h-2zM488 646h2v2h-2zM507 644h2v2h-2zM501 647h2v2h-2zM419 650h2v2h-2zM500 650h2v2h-2zM528 600h2v2h-2zM528 634h2v2h-2zM532 632h2v2h-2zM544 634h2v2h-2zM547 632h2v2h-2zM547 635h2v2h-2zM544 640h2v2h-2zM529 644h2v2h-2zM537 648h2v2h-2zM543 648h2v2h-2zM557 647h2v2h-2zM562 647h2v2h-2zM571 637h2v2h-2zM576 635h2v2h-2zM578 629h2v2h-2zM574 644h2v2h-2zM581 643h2v2h-2zM594 632h2v2h-2zM594 638h2v2h-2zM607 641h2v2h-2zM610 644h2v2h-2zM607 646h2v2h-2zM176 429h2v2h-2zM98 476h2v2h-2zM172 472h2v2h-2zM331 469h2v2h-2zM367 504h2v2h-2zM378 523h2v2h-2zM415 519h2v2h-2zM419 516h2v2h-2zM469 516h2v2h-2zM359 535h2v2h-2zM365 534h2v2h-2zM392 538h2v2h-2zM89 523h2v2h-2zM85 527h2v2h-2zM93 528h2v2h-2z" fill="#EEEE00"/>
 <path d="M78.6,320.6 L79.8,318.5 L82.9,327.1 L87.2,318.0 L93.2,321.5 L95.0,323.0 L97.5,333.5 L100.0,318.9 L101.7,323.2 L103.5,317.2 L105.2,323.2 L107.7,313.7 L109.5,313.4 L112.0,316.3 L114.6,315.4 L117.2,316.8 L124.9,317.2 L127.5,315.1 L130.0,318.0 L132.6,314.6 L134.3,313.7 L146.4,313.4 L148.1,322.3 L149.4,325.7 L151.5,320.6 L154.0,324.0 L156.7,324.0 L161.8,315.4 L165.2,318.9 L168.7,323.2 L171.2,322.3 L174.7,316.3 L179.0,318.9 L183.3,324.0 L185.8,319.7 L188.4,321.5 L191.0,318.9 L192.7,325.7 L195.3,336.9 L196.5,340.3 L197.8,324.0 L199.2,316.8 L200.4,320.6 L203.0,318.9 L207.3,316.3 L212.4,321.5 L216.7,330.5 L220.2,322.3 L222.6,320.3 L226.0,324.0 L230.3,326.6 L232.9,321.5 L236.3,322.3 L238.9,319.7 L241.5,326.6 L244.9,316.8 L247.1,317.2 L248.8,325.7 L250.9,336.0 L253.5,329.2 L256.9,330.0 L261.2,324.9 L265.5,321.5 L268.9,332.6 L271.5,325.7 L274.9,319.7 L278.3,318.0 L281.8,320.6 L284.4,319.7 L288.6,323.2 L293.8,319.7 L296.4,323.2 L299.8,321.5 L303.2,329.2 L305.8,324.0 L309.2,318.0 L313.5,321.5 L317.8,321.5 L322.1,327.5 L326.4,324.0 L329.8,322.3 L333.3,330.0 L337.6,321.5 L341.0,333.5 L344.4,324.9 L349.6,315.4 L352.1,325.7 L355.6,318.0 L358.7,334.3 L360.7,325.7 L364.2,326.6 L365.6,328.3 L367.6,328.3 L369.3,317.2 L370.5,326.6 L371.9,329.2 L372.7,353.2 L373.6,329.2 L375.3,318.0 L377.0,325.7 L380.4,332.6 L383.9,327.5 L388.2,325.7 L391.6,330.0 L395.0,321.5 L397.6,324.0 L401.0,331.7 L404.5,316.3 L408.8,315.4 L414.8,315.4 L416.5,329.2 L419.1,324.9 L422.5,334.3 L425.9,322.3 L429.4,318.9 L432.8,324.9 L437.1,330.9 L440.5,318.9 L443.1,326.6 L449.1,324.0 L452.5,325.7 L455.1,321.5 L459.4,315.4 L462.8,319.7 L465.4,327.5 L469.7,313.7 L474.0,317.2 L480.0,317.2 L483.4,312.9 L492.0,311.2 L499.7,311.2 L503.2,314.1 L506.6,312.9 L511.0,309.6 L514.4,311.3 L517.9,310.4 L523.0,309.6 L526.5,307.9 L529.9,310.8 L533.3,309.6 L538.5,311.8 L541.0,311.0 L545.3,312.5 L550.5,310.8 L553.9,313.9 L556.5,312.2 L560.0,312.5 L562.5,317.0 L565.9,310.8 L569.4,315.3 L573.6,312.2 L577.1,313.5 L579.7,312.2 L582.2,315.3 L585.7,312.5 L590.8,312.5 L593.4,324.2 L596.0,316.5 L599.4,323.3 L602.8,320.7 L607.1,319.9 L613.1,313.0 L618.3,312.2 L623.4,314.7 L627.7,318.7 L630.5,317.5 L633.4,318.2 L637.1,313.5 L641.4,315.6 L643.0,315.6" stroke="#10C4F4" stroke-width="1.4" fill="none" stroke-linejoin="round"/>
 </g>
 
</svg>
<div class="t" style="left:82.6px;top:254.5px;font-size:16px;letter-spacing:0.067px;color:#BDBDBD">trial version</div>
<div class="t" style="left:78.1px;top:233.3px;font-size:16px;letter-spacing:-0.6px;color:#000">MB/s</div>
<div class="t" style="left:620.4px;top:233.8px;font-size:16px;letter-spacing:-1.2px;color:#000">ms</div>
<div class="t" style="font-size:16px;left:0;width:70.3px;text-align:right;top:647.7px">50</div>
<div class="t" style="font-size:16px;left:648.4px;top:648.3px">0.05</div>
<div class="t" style="font-size:16px;left:0;width:70.3px;text-align:right;top:597.2px">100</div>
<div class="t" style="font-size:16px;left:648.4px;top:597.8px">0.10</div>
<div class="t" style="font-size:16px;left:0;width:70.3px;text-align:right;top:546.8px">150</div>
<div class="t" style="font-size:16px;left:648.4px;top:547.4px">0.15</div>
<div class="t" style="font-size:16px;left:0;width:70.3px;text-align:right;top:496.3px">200</div>
<div class="t" style="font-size:16px;left:648.4px;top:496.9px">0.20</div>
<div class="t" style="font-size:16px;left:0;width:70.3px;text-align:right;top:445.9px">250</div>
<div class="t" style="font-size:16px;left:648.4px;top:446.5px">0.25</div>
<div class="t" style="font-size:16px;left:0;width:70.3px;text-align:right;top:395.4px">300</div>
<div class="t" style="font-size:16px;left:648.4px;top:396.0px">0.30</div>
<div class="t" style="font-size:16px;left:0;width:70.3px;text-align:right;top:345.0px">350</div>
<div class="t" style="font-size:16px;left:648.4px;top:345.6px">0.35</div>
<div class="t" style="font-size:16px;left:0;width:70.3px;text-align:right;top:294.5px">400</div>
<div class="t" style="font-size:16px;left:648.4px;top:295.1px">0.40</div>
<div class="t" style="font-size:16px;left:0;width:70.3px;text-align:right;top:244.1px">450</div>
<div class="t" style="font-size:16px;left:648.4px;top:244.7px">0.45</div>
<div class="t" style="font-size:16px;left:28.3px;width:100px;text-align:center;top:715.1px">0</div>
<div class="t" style="font-size:16px;left:84.3px;width:100px;text-align:center;top:715.1px">25</div>
<div class="t" style="font-size:16px;left:140.3px;width:100px;text-align:center;top:715.1px">51</div>
<div class="t" style="font-size:16px;left:196.3px;width:100px;text-align:center;top:715.1px">76</div>
<div class="t" style="font-size:16px;left:253.3px;width:100px;text-align:center;top:715.1px">102</div>
<div class="t" style="font-size:16px;left:309.3px;width:100px;text-align:center;top:715.1px">128</div>
<div class="t" style="font-size:16px;left:365.3px;width:100px;text-align:center;top:715.1px">153</div>
<div class="t" style="font-size:16px;left:422.3px;width:100px;text-align:center;top:715.1px">179</div>
<div class="t" style="font-size:16px;left:478.3px;width:100px;text-align:center;top:715.1px">204</div>
<div class="t" style="font-size:16px;left:534.3px;width:100px;text-align:center;top:715.1px">230</div>
<div class="t" style="font-size:16px;left:617.2px;top:715.1px">256gB</div>

<!-- right panel -->
<div class="btn" style="left:705px;top:224px;width:107px;height:31px;border-color:#2F8CF2;box-shadow:inset 0 0 0 1px #A8CFF8;background:linear-gradient(#EFEFEF,#E3E3E3)"></div>
<div class="t" style="left:741.0px;top:232.0px;font-size:16px;letter-spacing:-0.575px;color:#000">Start</div>
<div class="sep" style="top:270px"></div>
<svg class="a" style="left:699px;top:278px" width="19" height="19" viewBox="0 0 19 19"><circle cx="9.5" cy="9.5" r="8.6" fill="#fff" stroke="#5A5A5A" stroke-width="1.4"/><circle cx="9.5" cy="9.5" r="4.9" fill="#222"/></svg>
<div class="t" style="left:722.0px;top:280.8px;font-size:16px;letter-spacing:0.0px;color:#000">Read</div>
<svg class="a" style="left:699px;top:301.5px" width="19" height="19" viewBox="0 0 19 19"><circle cx="9.5" cy="9.5" r="8.6" fill="#fff" stroke="#5A5A5A" stroke-width="1.4"/></svg>
<div class="t" style="left:722.5px;top:304.0px;font-size:16px;letter-spacing:-0.325px;color:#000">Write</div>
<div class="sep" style="top:327px"></div>
<svg class="a" style="left:699px;top:339px" width="19" height="19" viewBox="0 0 19 19"><rect x="0.6" y="0.6" width="17.8" height="17.8" fill="#fff" stroke="#5C5C5C" stroke-width="1.2"/></svg>
<div class="t" style="left:722.0px;top:341.3px;font-size:16px;letter-spacing:-0.245px;color:#000">Short stroke</div>
<div class="a" style="left:699px;top:368px;width:91px;height:29px;border:1px solid #B9B9B9;background:#fff"></div>
<div class="a" style="left:764px;top:369px;width:25px;height:27px;border-left:1px solid #D0D0D0;background:linear-gradient(#F0F0F0,#E4E4E4)"></div>
<div class="a" style="left:765px;top:382px;width:24px;height:1px;background:#D8D8D8"></div>
<svg class="a" style="left:771px;top:372px" width="12" height="22" viewBox="0 0 12 22"><path d="M2,7 L6,3 L10,7 Z M2,13 L10,13 L6,17 Z" fill="#606060"/></svg>
<div class="t" style="left:703.2px;top:375.2px;font-size:16px;letter-spacing:0.9px;color:#6D6D6D">40</div>
<div class="t" style="left:804.7px;top:375.0px;font-size:16px;letter-spacing:0.8px;color:#000">gB</div>
<svg class="a" style="left:699px;top:411px" width="19" height="19" viewBox="0 0 19 19"><rect x="0.6" y="0.6" width="17.8" height="17.8" fill="#fff" stroke="#5C5C5C" stroke-width="1.2"/><path d="M4.3,9.8 L8.8,13.9 L14.6,5.2" stroke="#000" stroke-width="3" fill="none"/></svg>
<div class="t" style="left:723.0px;top:412.7px;font-size:16px;letter-spacing:-0.25px;color:#000">Transfer rate</div>
<div class="sep" style="top:433px"></div>
<div class="t" style="left:699.0px;top:439.5px;font-size:16px;letter-spacing:-0.883px;color:#000">Minimum</div>
<div class="box" style="top:459px;height:22px"></div>
<div class="t" style="left:716.87px;top:462.3px;font-size:17px;color:#08C4F8;font-weight:bold;transform:scaleX(1.128);transform-origin:0 0">349.4 MB/s</div>
<div class="t" style="left:698.6px;top:488.5px;font-size:16px;letter-spacing:-0.717px;color:#000">Maximum</div>
<div class="box" style="top:506px;height:22px"></div>
<div class="t" style="left:716.87px;top:509.5px;font-size:17px;color:#08C4F8;font-weight:bold;transform:scaleX(1.128);transform-origin:0 0">393.4 MB/s</div>
<div class="t" style="left:699.1px;top:532.4px;font-size:16px;letter-spacing:-0.3px;color:#000">Average</div>
<div class="box" style="top:552px;height:22px"></div>
<div class="t" style="left:716.77px;top:554.9px;font-size:17px;color:#08C4F8;font-weight:bold;transform:scaleX(1.129);transform-origin:0 0">382.1 MB/s</div>
<div class="sep" style="top:586px"></div>
<svg class="a" style="left:699px;top:594px" width="19" height="19" viewBox="0 0 19 19"><rect x="0.6" y="0.6" width="17.8" height="17.8" fill="#fff" stroke="#5C5C5C" stroke-width="1.2"/><path d="M4.3,9.8 L8.8,13.9 L14.6,5.2" stroke="#000" stroke-width="3" fill="none"/></svg>
<div class="t" style="left:723.3px;top:597.0px;font-size:16px;letter-spacing:-0.43px;color:#000">Access time</div>
<div class="box" style="top:617px;height:21px"></div>
<div class="t" style="left:729.52px;top:619.3px;font-size:17px;color:#F0F000;font-weight:bold;transform:scaleX(1.078);transform-origin:0 0">0.114 ms</div>
<svg class="a" style="left:699px;top:644px" width="19" height="19" viewBox="0 0 19 19"><rect x="0.6" y="0.6" width="17.8" height="17.8" fill="#fff" stroke="#5C5C5C" stroke-width="1.2"/><path d="M4.3,9.8 L8.8,13.9 L14.6,5.2" stroke="#000" stroke-width="3" fill="none"/></svg>
<div class="t" style="left:722.1px;top:647.3px;font-size:16px;letter-spacing:-0.422px;color:#000">Burst rate</div>
<div class="box" style="top:667px;height:21px"></div>
<div class="t" style="left:718.90px;top:669.5px;font-size:17px;color:#FFFFFF;font-weight:bold;transform:scaleX(1.105);transform-origin:0 0">173.6 MB/s</div>
<div class="t" style="left:698.1px;top:695.4px;font-size:16px;letter-spacing:-0.25px;color:#000">CPU usage</div>
<div class="box" style="top:715px;height:22px"></div>
<div class="t" style="left:746.94px;top:717.3px;font-size:17px;color:#FFFFFF;font-weight:bold;transform:scaleX(1.055);transform-origin:0 0">3.5%</div>
</body></html>
